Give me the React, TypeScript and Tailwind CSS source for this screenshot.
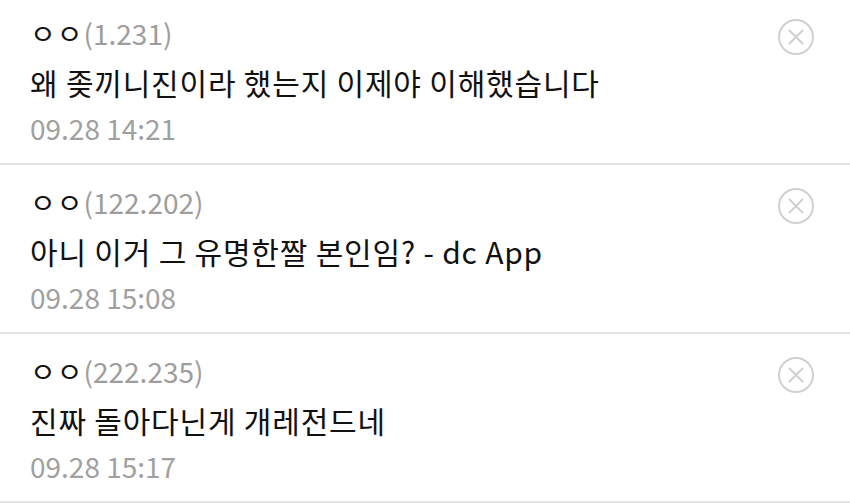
import React from "react";

const comments = [
  { ip: "(1.231)", text: "왜 좆끼니진이라 했는지 이제야 이해했습니다", date: "09.28 14:21" },
  { ip: "(122.202)", text: "아니 이거 그 유명한짤 본인임? - dc App", date: "09.28 15:08" },
  { ip: "(222.235)", text: "진짜 돌아다닌게 개레전드네", date: "09.28 15:17" },
];

function CloseIcon() {
  return (
    <svg width="38" height="38" viewBox="0 0 38 38" fill="none">
      <circle cx="19" cy="19" r="17" stroke="#d0d0d0" strokeWidth="2" />
      <path d="M12.5 12.5 L25.5 25.5 M25.5 12.5 L12.5 25.5" stroke="#d0d0d0" strokeWidth="2" strokeLinecap="round" />
    </svg>
  );
}

export default function App() {
  return (
    <div
      className="w-[850px] h-[503px] overflow-hidden bg-white"
      style={{ fontFamily: '"Noto Sans CJK KR", "Noto Sans", sans-serif' }}
    >
      <div className="-mt-[4px]">
        {comments.map((c, i) => (
          <div key={i} className="flex border-b-2 border-[#e3e3e5] pl-[30px] pr-[35px]">
            <div className="flex-1 pt-[18px] pb-[19px]">
              <div className="h-[38px] flex items-center">
                <span className="text-[28px] text-[#111] tracking-[1px]">ㅇㅇ</span>
                <span className="text-[28px] text-[#9d9d9d]">{c.ip}</span>
              </div>
              <div className="h-[60px] flex items-center text-[30px] text-[#111] tracking-[0.8px]">
                {c.text}
              </div>
              <div className="h-[32px] flex items-center text-[28px] text-[#a0a0a0]">
                {c.date}
              </div>
            </div>
            <div className="pt-[22px]">
              <CloseIcon />
            </div>
          </div>
        ))}
      </div>
    </div>
  );
}
